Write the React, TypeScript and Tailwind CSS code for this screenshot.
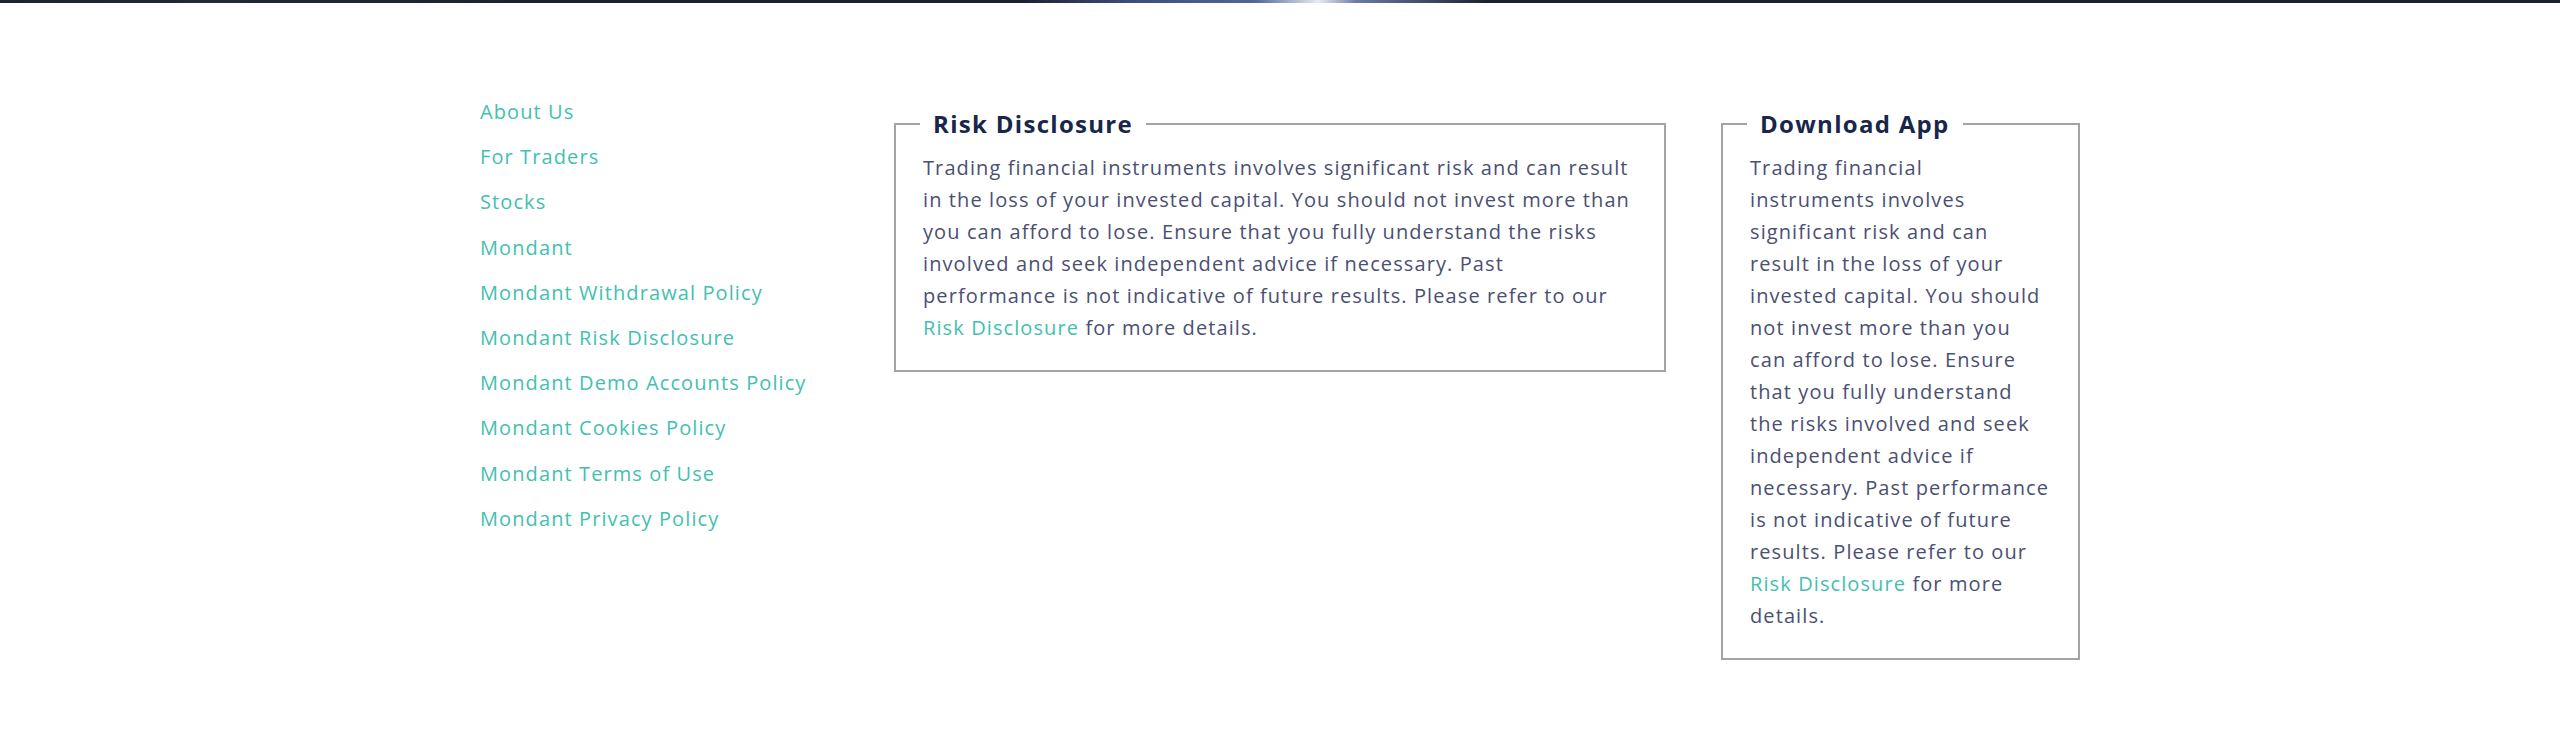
import React from "react"

const links = [
  "About Us",
  "For Traders",
  "Stocks",
  "Mondant",
  "Mondant Withdrawal Policy",
  "Mondant Risk Disclosure",
  "Mondant Demo Accounts Policy",
  "Mondant Cookies Policy",
  "Mondant Terms of Use",
  "Mondant Privacy Policy",
]

const disclaimer =
  "Trading financial instruments involves significant risk and can result in the loss of your invested capital. You should not invest more than you can afford to lose. Ensure that you fully understand the risks involved and seek independent advice if necessary. Past performance is not indicative of future results. Please refer to our"

function InfoBox({ title, className }: { title: string; className: string }) {
  return (
    <fieldset className={`border-2 border-[#a3a3a3] ${className}`}>
      <legend className="ml-[24px] px-[13px] text-[24px] leading-[32px] font-bold tracking-[1.3px] text-[#17264a]">
        {title}
      </legend>
      <p className="px-[27px] pt-[12px] pb-[26px] text-[20px] leading-[32px] tracking-[1.1px] text-[#4a5072]">
        {disclaimer}{" "}
        <a href="#" className="text-[#43c0b0]">
          Risk Disclosure
        </a>{" "}
        for more details.
      </p>
    </fieldset>
  )
}

export default function App() {
  return (
    <div className="min-h-[747px] bg-white font-['Open_Sans',sans-serif]">
      <div className="h-[3px] bg-[linear-gradient(90deg,#1d2232_0%,#1f2a36_8%,#1d2232_20%,#1d2232_40%,#3d4c78_44%,#52659a_49%,#e8ebf2_51.5%,#6a7aa4_53%,#1d2232_58%,#1d2232_100%)]" />
      <div className="mx-auto flex w-[1600px] items-start pt-[94px]">
        <ul className="w-[414px] space-y-[17.2px] pt-[1px]">
          {links.map((link) => (
            <li key={link} className="text-[20px] leading-[28px] tracking-[1.1px] text-[#43c0b0]">
              <a href="#">{link}</a>
            </li>
          ))}
        </ul>
        <InfoBox title="Risk Disclosure" className="mt-[11px] w-[772px]" />
        <InfoBox title="Download App" className="ml-[55px] mt-[11px] w-[359px]" />
      </div>
    </div>
  )
}
